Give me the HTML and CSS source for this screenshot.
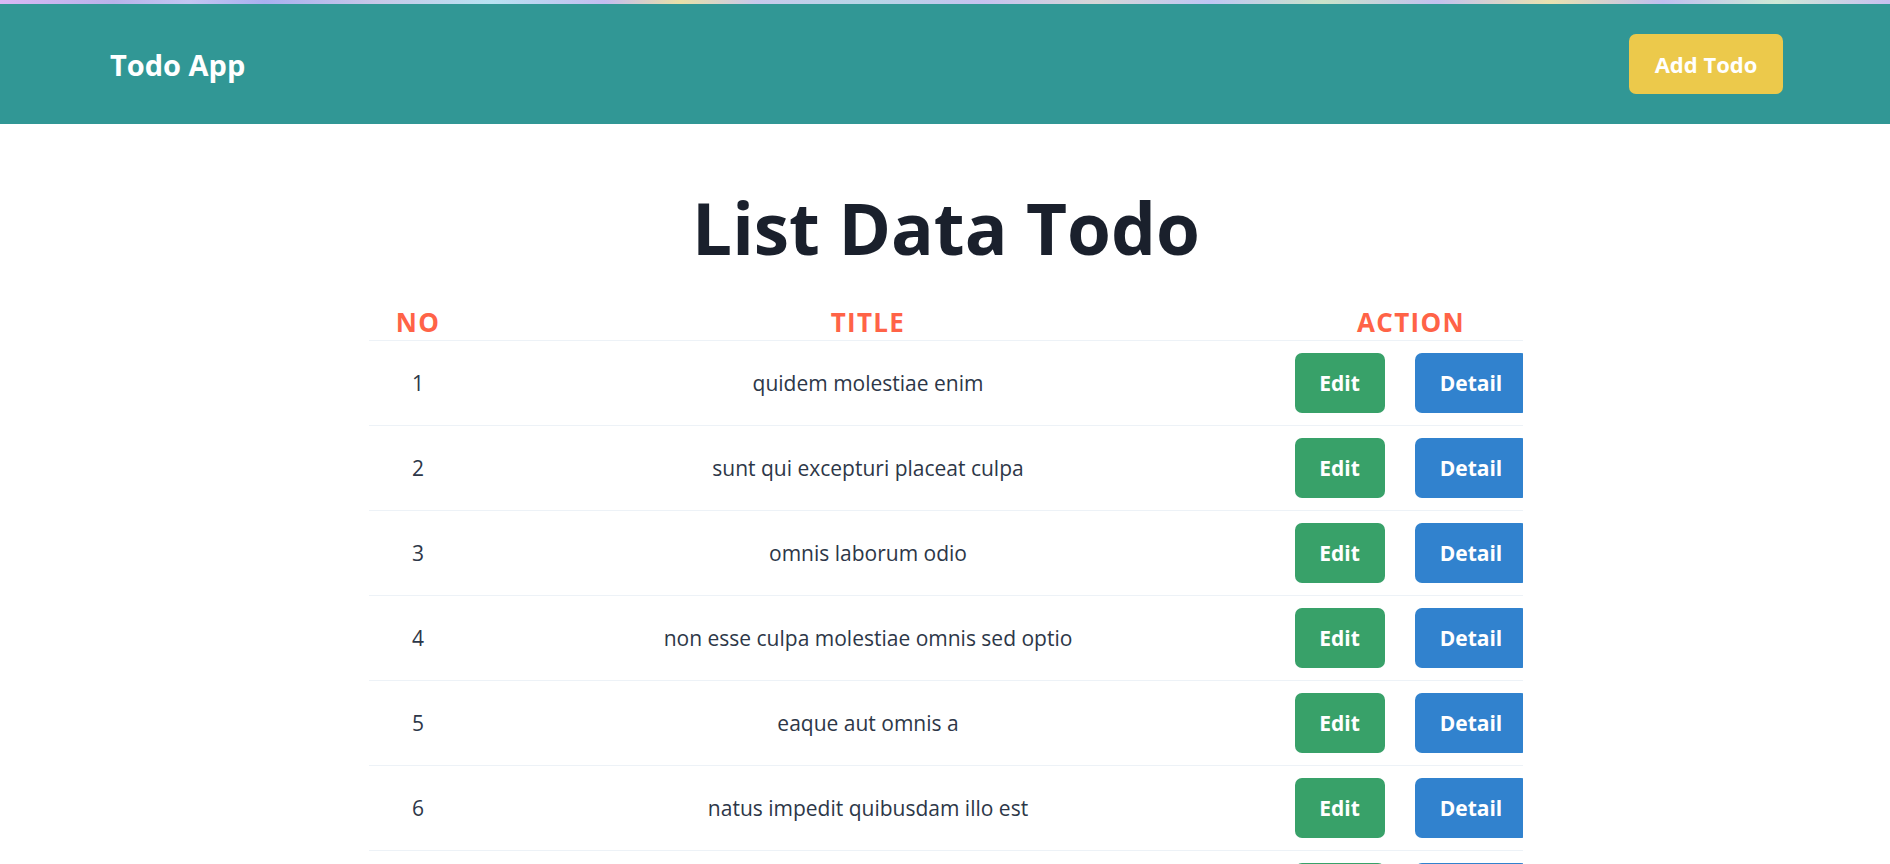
FILE: index.html
```html
<!DOCTYPE html>
<html lang="en">
<head>
<meta charset="utf-8">
<title>Todo App</title>
<link rel="stylesheet" href="styles.css">
</head>
<body>
<div class="topstrip"></div>
<header class="navbar">
  <div class="brand">Todo App</div>
  <button class="btn btn-add">Add Todo</button>
</header>
<main class="main">
  <h1 class="title">List Data Todo</h1>
  <div class="table-wrap">
    <table class="todo-table">
      <colgroup>
        <col class="col-no">
        <col class="col-title">
        <col class="col-action">
      </colgroup>
      <thead>
        <tr><th>No</th><th>Title</th><th>Action</th></tr>
      </thead>
      <tbody>
        <tr><td>1</td><td>quidem molestiae enim</td><td><div class="actions"><button class="btn btn-edit">Edit</button><button class="btn btn-detail">Detail</button></div></td></tr>
        <tr><td>2</td><td>sunt qui excepturi placeat culpa</td><td><div class="actions"><button class="btn btn-edit">Edit</button><button class="btn btn-detail">Detail</button></div></td></tr>
        <tr><td>3</td><td>omnis laborum odio</td><td><div class="actions"><button class="btn btn-edit">Edit</button><button class="btn btn-detail">Detail</button></div></td></tr>
        <tr><td>4</td><td>non esse culpa molestiae omnis sed optio</td><td><div class="actions"><button class="btn btn-edit">Edit</button><button class="btn btn-detail">Detail</button></div></td></tr>
        <tr><td>5</td><td>eaque aut omnis a</td><td><div class="actions"><button class="btn btn-edit">Edit</button><button class="btn btn-detail">Detail</button></div></td></tr>
        <tr><td>6</td><td>natus impedit quibusdam illo est</td><td><div class="actions"><button class="btn btn-edit">Edit</button><button class="btn btn-detail">Detail</button></div></td></tr>
        <tr><td>7</td><td>quibusdam autem aliquid et et quia</td><td><div class="actions"><button class="btn btn-edit">Edit</button><button class="btn btn-detail">Detail</button></div></td></tr>
        <tr><td>8</td><td>qui fuga est a eum</td><td><div class="actions"><button class="btn btn-edit">Edit</button><button class="btn btn-detail">Detail</button></div></td></tr>
      </tbody>
    </table>
  </div>
</main>
</body>
</html>
```
FILE: styles.css
```css
* { box-sizing: border-box; }

html, body {
  margin: 0;
  padding: 0;
  background: #ffffff;
  font-family: "Open Sans", "Noto Sans", sans-serif;
  color: #1a202c;
}

.topstrip {
  height: 4px;
  background: linear-gradient(90deg,
    #d9b8f5 0%, #b9b3ea 6%, #c3c6f2 10%, #a9b0f0 14%, #c8c8e8 20%,
    #b7e3f2 26%, #c4bdf0 32%, #e8e0a8 36%, #c8c9ec 40%, #b6d6e6 46%,
    #c6c2f0 52%, #d6d6d6 58%, #bfc6f4 64%, #c9e3c9 70%, #c3c1ef 76%,
    #e9e2b0 82%, #bfbff0 88%, #cfe9d6 94%, #c8c0f0 100%);
}

.navbar {
  height: 120px;
  background: #319795;
  display: flex;
  align-items: center;
  justify-content: space-between;
  padding: 0 107px 0 110px;
}

.brand {
  color: #ffffff;
  font-size: 29px;
  font-weight: 700;
}

.btn {
  border: none;
  color: #ffffff;
  font-family: "Open Sans", "Noto Sans", sans-serif;
  font-weight: 700;
  font-size: 21px;
  height: 60px;
  border-radius: 7px;
  padding: 0;
  cursor: pointer;
  line-height: 1;
}

.btn-add {
  background: #ecc94b;
  width: 154px;
  font-size: 22px;
}

.main {
  padding-left: 2px;
}

.title {
  margin: 59px 0 0;
  text-align: center;
  font-size: 71px;
  line-height: 90px;
  font-weight: 700;
  color: #1a202c;
}

.table-wrap {
  width: 1154px;
  margin: 31px auto 0;
  overflow: hidden;
}

.todo-table {
  width: 1184px;
  border-collapse: collapse;
  table-layout: fixed;
}

.col-no { width: 98px; }
.col-title { width: 802px; }
.col-action { width: 284px; }

.todo-table th {
  color: #ff6347;
  font-size: 26px;
  font-weight: 700;
  text-transform: uppercase;
  letter-spacing: 0.05em;
  line-height: 36px;
  padding: 0;
  text-align: center;
  border-bottom: 1px solid #edf2f7;
}

.todo-table td {
  text-align: center;
  font-size: 21px;
  color: #2d3748;
  padding: 12px 0;
  height: 85px;
  border-bottom: 1px solid #edf2f7;
  vertical-align: middle;
}

.actions {
  display: flex;
  justify-content: center;
  gap: 30px;
}

.btn-edit {
  background: #38a169;
  width: 90px;
}

.btn-detail {
  background: #3182ce;
  width: 113px;
}
```
